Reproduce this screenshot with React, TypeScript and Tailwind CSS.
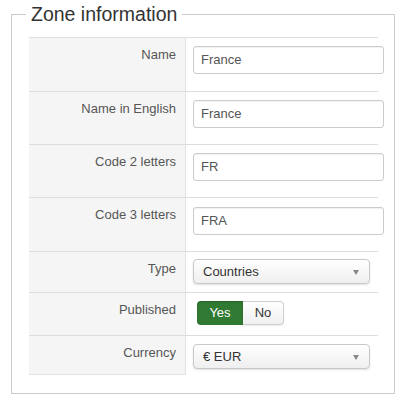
import React from "react";

type Row = {
  label: string;
  h: string;
  pt: string;
  kind: "input" | "select" | "toggle";
  value?: string;
};

const rows: Row[] = [
  { label: "Name", h: "h-[54px]", pt: "pt-[8px]", kind: "input", value: "France" },
  { label: "Name in English", h: "h-[53px]", pt: "pt-[8px]", kind: "input", value: "France" },
  { label: "Code 2 letters", h: "h-[53px]", pt: "pt-[8px]", kind: "input", value: "FR" },
  { label: "Code 3 letters", h: "h-[54px]", pt: "pt-[9px]", kind: "input", value: "FRA" },
  { label: "Type", h: "h-[41px]", pt: "pt-[7px]", kind: "select", value: "Countries" },
  { label: "Published", h: "h-[43px]", pt: "pt-[8px]", kind: "toggle" },
  { label: "Currency", h: "h-[40px]", pt: "pt-[8px]", kind: "select", value: "€ EUR" },
];

function FakeSelect({ value }: { value: string }) {
  return (
    <div className="relative flex h-[25px] w-[177px] items-center rounded-[4px] border border-[#c8c8c8] bg-gradient-to-b from-white to-[#efefef] pl-[9px] text-[13px] text-[#333] shadow-[0_1px_2px_rgba(0,0,0,0.12)]">
      {value}
      <span className="absolute right-[10px] top-[10px] h-0 w-0 border-x-[3.5px] border-t-[5px] border-x-transparent border-t-[#888]" />
    </div>
  );
}

function Toggle() {
  return (
    <div className="ml-[4px] flex h-[24px] text-[13px]">
      <div className="flex w-[46px] items-center justify-center rounded-l-[4px] bg-[#317a33] text-white shadow-[inset_0_1px_2px_rgba(0,0,0,0.2)]">
        Yes
      </div>
      <div className="flex w-[41px] items-center justify-center rounded-r-[4px] border border-l-0 border-[#d0d0d0] bg-gradient-to-b from-white to-[#f0f0f0] text-[#333] shadow-[0_1px_2px_rgba(0,0,0,0.08)]">
        No
      </div>
    </div>
  );
}

export default function App() {
  return (
    <div className="h-[403px] w-[402px] bg-white pl-[11px] font-['Liberation_Sans',Arial,sans-serif]">
      <fieldset className="h-[394px] w-[384px] border border-[#cccccc] pl-[17px]">
        <legend className="ml-[-3px] px-[5px] text-[19.5px] leading-[28px] text-[#333]">Zone information</legend>
        <div className="mt-[9px] w-[349px]">
          {rows.map((r, i) => (
            <div key={r.label} className={`flex border-t border-[#dddddd] ${r.h}`}>
              <div
                className={`w-[157px] shrink-0 border-r border-[#e2e2e2] bg-[#f5f5f5] pr-[9px] pt-[8px] text-right text-[13px] leading-[18px] text-[#555] ${
                  i === rows.length - 1 ? "border-b" : ""
                }`}
              >
                {r.label}
              </div>
              <div className={`pl-[7px] ${r.pt}`}>
                {r.kind === "input" && (
                  <div className="flex h-[28px] w-[191px] items-center rounded-[3px] border border-[#cccccc] bg-white px-[7px] text-[13px] text-[#555] shadow-[inset_0_1px_1px_rgba(0,0,0,0.06)]">
                    {r.value}
                  </div>
                )}
                {r.kind === "select" && <FakeSelect value={r.value ?? ""} />}
                {r.kind === "toggle" && <Toggle />}
              </div>
            </div>
          ))}
        </div>
      </fieldset>
    </div>
  );
}
